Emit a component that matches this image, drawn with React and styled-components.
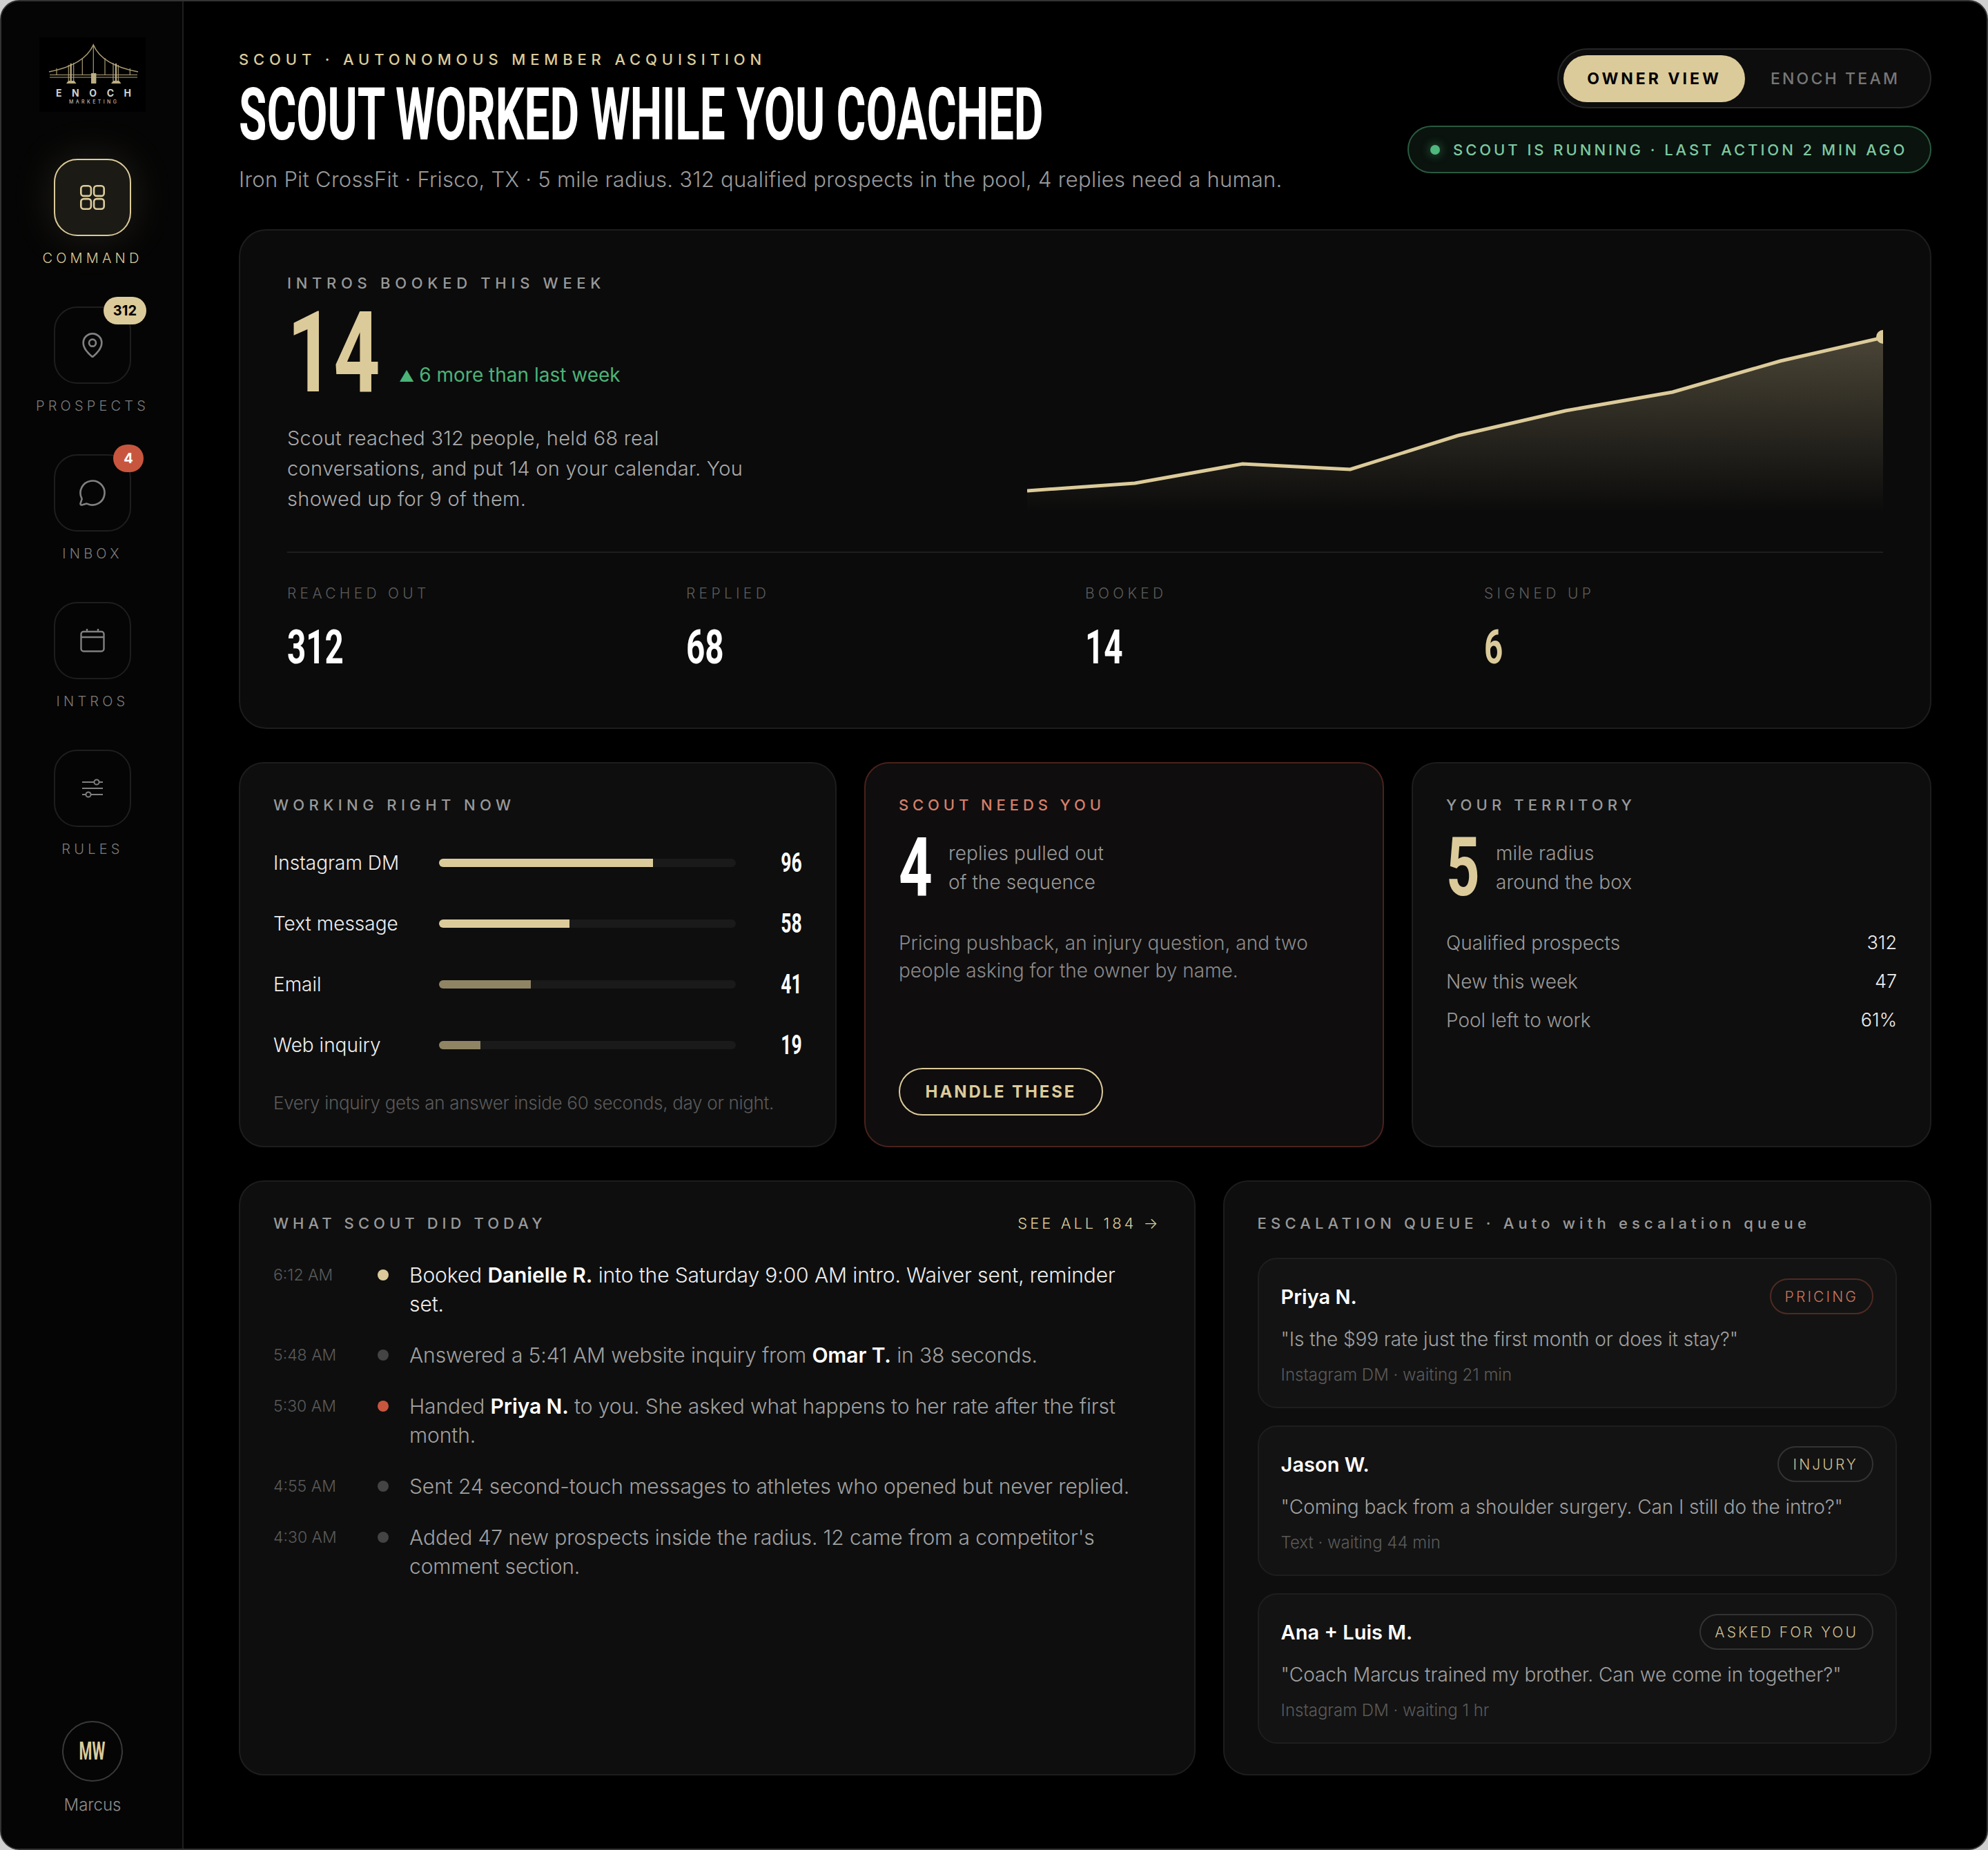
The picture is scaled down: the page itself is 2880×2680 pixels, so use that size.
import React from "react";
import styled, { createGlobalStyle } from "styled-components";
import { MapPin, MessageCircle } from "lucide-react";

const GOLD = "#dccb9a";
const SANS = `Inter, "Open Sans", "Liberation Sans", sans-serif`;
const COND = `Roboto, "Liberation Sans", sans-serif`;

const Global = createGlobalStyle`
  html, body { margin: 0; padding: 0; background: #cfcfcf; }
  * { box-sizing: border-box; }
`;

const Frame = styled.div`
  width: 2880px; height: 2680px; display: flex; overflow: hidden;
  background: #000; border: 2px solid #333; border-radius: 28px;
  font-family: ${SANS}; color: #eee;
`;

const Sidebar = styled.aside`
  flex: 0 0 264px; background: #050505; border-right: 2px solid #1e1e1e;
  display: flex; flex-direction: column; align-items: center;
  padding: 52px 0 47px 2px;
`;
const LogoBox = styled.div`width: 154px; height: 108px; background: #000; margin-bottom: 68px; flex: none;`;
const NavList = styled.nav`display: flex; flex-direction: column; gap: 58px; align-items: center;`;
const NavItem = styled.div`display: flex; flex-direction: column; align-items: center; gap: 20px;`;
const NavBtn = styled.div`
  position: relative; width: 112px; height: 112px; border-radius: 34px;
  display: flex; align-items: center; justify-content: center;
  border: 2px solid ${p => (p.$active ? GOLD : "#1e1e1e")};
  background: ${p => (p.$active ? "#1b1a15" : "transparent")};
  color: ${p => (p.$active ? GOLD : "#808080")};
  box-shadow: ${p => (p.$active ? "0 0 64px rgba(220,203,154,.14)" : "none")};
`;
const NavLabel = styled.div`
  font-size: 20px; line-height: 24px; font-weight: 300; letter-spacing: 5.2px;
  color: ${p => (p.$active ? GOLD : "#7c7c7c")}; white-space: nowrap;
`;
const NavBadge = styled.span`
  position: absolute; top: -16px; right: ${p => p.$right}px; height: 40px; min-width: 44px; padding: 0 14px;
  border-radius: 20px; display: flex; align-items: center; justify-content: center;
  font-size: 20px; font-weight: 700;
  background: ${p => (p.$red ? "#c8563e" : GOLD)}; color: ${p => (p.$red ? "#fff" : "#000")};
`;
const Person = styled.div`margin-top: auto; display: flex; flex-direction: column; align-items: center; gap: 18px;`;
const Avatar = styled.div`
  width: 88px; height: 88px; border-radius: 50%; border: 2px solid #3a3a3a;
  display: flex; align-items: center; justify-content: center;
`;
const PersonName = styled.div`font-size: 24px; line-height: 32px; font-weight: 300; color: #8c8c8c;`;

const Cond = styled.span`
  display: inline-block; white-space: nowrap; font-family: ${COND}; font-weight: 700;
  font-size: ${p => p.$size}px; line-height: ${p => p.$lh || p.$size}px;
  color: ${p => p.$color || "#fff"};
  transform: scaleX(${p => p.$sx}); transform-origin: ${p => p.$origin || "left"} center;
`;

const Main = styled.main`flex: 1; min-width: 0; padding: 70px 80px 0 80px; display: flex; flex-direction: column;`;
const Header = styled.header`display: flex; justify-content: space-between; align-items: flex-start; margin-bottom: 50px;`;
const HeadLeft = styled.div`flex: 1; min-width: 0;`;
const Eyebrow = styled.div`font-size: 22px; line-height: 28px; font-weight: 500; letter-spacing: 6.85px; color: ${GOLD}; white-space: nowrap;`;
const TitleLine = styled.h1`margin: 15px 0 19px; font-weight: 700; height: 104px;`;
const Sub = styled.p`margin: 0; font-size: 31px; line-height: 44px; font-weight: 300; color: #9a9a9a; white-space: nowrap; letter-spacing: .26px;`;
const HeadRight = styled.div`flex: none; margin-top: -2px; display: flex; flex-direction: column; align-items: flex-end; gap: 25px;`;
const Toggle = styled.div`
  height: 87px; width: 542px; border-radius: 44px; border: 2px solid #262626; background: #0d0d0d;
  display: flex; align-items: center; padding: 0 7px;
`;
const ToggleOn = styled.div`
  width: 263px; height: 68px; border-radius: 34px; background: ${GOLD}; color: #000;
  display: flex; align-items: center; justify-content: center;
  font-size: 23px; font-weight: 700; letter-spacing: 4px; white-space: nowrap;
`;
const ToggleOff = styled.div`
  flex: 1; text-align: center; font-size: 23px; font-weight: 500; letter-spacing: 3.2px; color: #777; white-space: nowrap;
`;
const Status = styled.div`
  width: 759px; height: 69px; border-radius: 35px; border: 2px solid #2a5a40; background: #0a130e;
  display: flex; align-items: center; padding-left: 31px; gap: 19px;
`;
const StatusDot = styled.span`width: 14px; height: 14px; border-radius: 50%; background: #4fb87c; box-shadow: 0 0 14px rgba(79,184,124,.6);`;
const StatusText = styled.span`font-size: 22px; font-weight: 500; letter-spacing: 3.95px; color: #7ec9a0; white-space: nowrap;`;

const Card = styled.section`
  border: 2px solid ${p => p.$border || "#1d1d1d"}; background: ${p => p.$bg || "#0e0e0e"};
  border-radius: 36px; padding: 48px 48px 44px; display: flex; flex-direction: column; min-width: 0;
`;
const Hero = styled(Card)`padding: 64px 68px 82px; background: #0b0b0b; border-radius: 40px; margin-bottom: 48px;`;
const HeroTop = styled.div`display: flex; align-items: flex-start; padding-bottom: 54px; border-bottom: 2px solid #1e1e1e; margin-bottom: 47px;`;
const HeroLeft = styled.div`flex: 0 0 1072px; min-width: 0;`;
const Label = styled.div`
  font-size: 22px; line-height: 24px; font-weight: 500; letter-spacing: ${p => p.$sp || 6.6}px; white-space: nowrap;
  color: ${p => p.$color || "#999"};
`;
const BigRow = styled.div`display: flex; align-items: flex-end; margin: 32px 0 43px; height: 116px;`;
const BigSlot = styled.div`flex: 0 0 162px; min-width: 0; height: 116px;`;
const Delta = styled.div`font-size: 28px; line-height: 36px; font-weight: 400; color: #4bb377; margin-bottom: 7px; white-space: nowrap;`;
const DeltaArrow = styled.span`font-size: 22px; margin-right: 7px;`;
const Para = styled.p`margin: 0; font-size: 29px; line-height: 44px; font-weight: 300; color: #aaa; max-width: 700px; letter-spacing: .3px;`;
const Chart = styled.svg`flex: none; width: 1240px; height: 270px; margin-top: 74px; overflow: hidden;`;
const Stats = styled.div`display: grid; grid-template-columns: repeat(4, 1fr);`;
const Stat = styled.div`display: flex; flex-direction: column; gap: 32px;`;
const StatLabel = styled.div`font-size: 21px; line-height: 24px; font-weight: 300; letter-spacing: 5.3px; color: #5c5c5c; white-space: nowrap;`;

const Row2 = styled.div`display: grid; grid-template-columns: 1.15fr 1fr 1fr; gap: 40px; margin-bottom: 48px;`;
const Row3 = styled.div`display: grid; grid-template-columns: 1.35fr 1fr; gap: 40px; height: 861px;`;

const Bars = styled.div`display: flex; flex-direction: column; gap: 48px; margin-top: 52px;`;
const BarRow = styled.div`display: flex; align-items: center; height: 40px;`;
const BarName = styled.div`flex: 0 0 240px; font-size: 28px; font-weight: 300; color: #eee; white-space: nowrap;`;
const Track = styled.div`flex: 0 0 430px; height: 12px; border-radius: 6px; background: #1a1a1a; overflow: hidden;`;
const Fill = styled.div`height: 100%; background: ${p => (p.$dim ? "#8f8565" : GOLD)};`;
const BarValue = styled.div`flex: 1; display: flex; justify-content: flex-end;`;
const Note = styled.div`margin-top: 46px; font-size: 26px; line-height: 36px; font-weight: 300; color: #5a5a5a; white-space: nowrap; letter-spacing: -.3px;`;

const NumberRow = styled.div`display: flex; align-items: center; margin-top: 37px; height: 84px;`;
const NumSlot = styled.div`flex: 0 0 ${p => p.$w}px; height: 84px; display: flex; align-items: center;`;
const NumText = styled.div`font-size: 28px; line-height: 42px; font-weight: 300; color: #999; white-space: nowrap; letter-spacing: .1px;`;
const Body = styled.p`margin: 47px 0 0; font-size: 28px; line-height: 40px; font-weight: 300; color: #8a8a8a;`;
const Handle = styled.button`
  margin-top: auto; align-self: flex-start; width: 296px; height: 69px; border-radius: 35px; border: 2px solid ${GOLD};
  background: transparent; color: ${GOLD}; font-family: ${SANS}; font-size: 24px; font-weight: 700; letter-spacing: .12em; white-space: nowrap; padding: 0;
`;
const Kv = styled.div`display: flex; flex-direction: column; gap: 16px; margin-top: 47px;`;
const KvRow = styled.div`display: flex; justify-content: space-between; font-size: 28px; line-height: 40px; font-weight: 300; color: #999;`;
const KvVal = styled.span`color: #eee; font-weight: 300; font-size: 27px;`;

const ListHead = styled.div`display: flex; justify-content: space-between; align-items: center;`;
const SeeAll = styled.div`font-size: 22px; line-height: 24px; font-weight: 300; letter-spacing: 4px; color: ${GOLD}; white-space: nowrap;`;
const Feed = styled.div`display: flex; flex-direction: column; gap: 32px; margin-top: 42px;`;
const FeedRow = styled.div`display: grid; grid-template-columns: 146px 51px 1fr; align-items: start;`;
const FeedTime = styled.div`font-size: 23px; line-height: 42px; font-weight: 300; color: #5a5a5a; white-space: nowrap;`;
const DotCell = styled.div`height: 42px; display: flex; align-items: center;`;
const FeedDot = styled.span`width: 16px; height: 16px; border-radius: 50%; background: ${p => p.$c}; margin-left: 5px;`;
const FeedText = styled.div`
  font-size: 30px; line-height: 42px; font-weight: 300; color: ${p => (p.$first ? "#eee" : "#a0a0a0")}; letter-spacing: -.1px; max-width: 1060px;
  strong { font-weight: 600; color: #fff; }
`;

const Queue = styled.div`display: flex; flex-direction: column; gap: 25px; margin-top: 38px;`;
const QItem = styled.article`
  border: 2px solid #1e1e1e; background: #131313; border-radius: 28px; padding: 28px 32px; height: 218px;
`;
const QHead = styled.div`display: flex; justify-content: space-between; align-items: center; height: 52px;`;
const QName = styled.div`font-size: 29px; font-weight: 600; color: #fff; white-space: nowrap;`;
const QTag = styled.span`
  height: 52px; border-radius: 26px; padding: 0 20px; display: flex; align-items: center; white-space: nowrap;
  font-size: 21px; font-weight: 300; letter-spacing: .15em;
  border: 2px solid ${p => (p.$red ? "#4f2a22" : "#333")}; color: ${p => (p.$red ? "#c8765c" : "#cfbf92")};
`;
const QQuote = styled.div`margin-top: 15px; font-size: 28px; line-height: 42px; font-weight: 300; color: #a0a0a0; white-space: nowrap; letter-spacing: -.08px;`;
const QMeta = styled.div`margin-top: 13px; font-size: 24px; line-height: 36px; font-weight: 300; color: #5a5a5a; white-space: nowrap;`;

const Logo = () => (
  <svg width="154" height="108" viewBox="0 0 154 108">
    <g stroke="#a99b72" fill="none">
      <path d="M14 50 C40 45 68 34 78.3 11 C88 34 116 45 143 50" strokeWidth="1.6" />
      <path d="M15 54.5H142M15 58H142" strokeWidth="1.2" stroke="#b3a579" />
      <path d="M78.3 11V52M25 45V54M62.3 30V54M95 30V54M131.3 45V54M42.3 40V63M49.7 37V63M107 37V63M114.3 40V63" strokeWidth="1.2" />
      <path d="M45.7 38V63M111 38V63" strokeWidth="2.2" stroke="#bdae82" />
    </g>
    <rect x="75" y="52" width="7.4" height="15" rx="0.6" fill="#bcae84" />
    <path d="M42 63H50.5L53.5 67H39ZM107 63H115.5L118.5 67H104Z" fill="#bcae84" />
    <text x="24" y="86" textLength="109" fontFamily={SANS} fontSize="14" fontWeight="700" fill="#cfcfcf">ENOCH</text>
    <text x="43" y="95.5" textLength="69" fontFamily={SANS} fontSize="7" fontWeight="500" fill="#b8b8b8">MARKETING</text>
  </svg>
);

const GridIcon = () => (
  <svg width="36" height="36" viewBox="0 0 36 36" fill="none" stroke="currentColor" strokeWidth="2.6">
    <rect x="1.3" y="1.3" width="14.6" height="14.6" rx="4" />
    <rect x="20.1" y="1.3" width="14.6" height="14.6" rx="4" />
    <rect x="1.3" y="20.1" width="14.6" height="14.6" rx="4" />
    <rect x="20.1" y="20.1" width="14.6" height="14.6" rx="4" />
  </svg>
);
const CalIcon = () => (
  <svg width="36" height="34" viewBox="0 0 36 34" fill="none" stroke="currentColor" strokeWidth="2.4">
    <rect x="1.5" y="4" width="33" height="28.5" rx="3.5" />
    <path d="M1.5 12H34.5M10 0V5M26 0V5" />
  </svg>
);
const SlidersIcon = () => (
  <svg width="30" height="28" viewBox="0 0 30 28" fill="none" stroke="currentColor" strokeWidth="2">
    <path d="M0 5H17M25 5H30M0 14H30M0 23H5M13 23H30" />
    <circle cx="21" cy="5" r="3.6" />
    <circle cx="9" cy="23" r="3.6" />
  </svg>
);

const nav = [
  { label: "COMMAND", icon: <GridIcon />, active: true },
  { label: "PROSPECTS", icon: <MapPin size={40} strokeWidth={1.6} />, badge: "312", right: -24 },
  { label: "INBOX", icon: <MessageCircle size={42} strokeWidth={1.5} />, badge: "4", red: true, right: -20 },
  { label: "INTROS", icon: <CalIcon /> },
  { label: "RULES", icon: <SlidersIcon /> },
];
const bars = [
  ["Instagram DM", 72, "96", false],
  ["Text message", 44, "58", false],
  ["Email", 31, "41", true],
  ["Web inquiry", 14, "19", true],
];
const pts = "0,239 156,228 312,200 468,208 624,159 780,123 935,96 1091,51 1240,17";

const feed = [
  { t: "6:12 AM", c: GOLD, first: true, x: <>Booked <strong>Danielle R.</strong> into the Saturday 9:00 AM intro. Waiver sent, reminder set.</> },
  { t: "5:48 AM", c: "#444", x: <>Answered a 5:41 AM website inquiry from <strong>Omar T.</strong> in 38 seconds.</> },
  { t: "5:30 AM", c: "#c8563e", x: <>Handed <strong>Priya N.</strong> to you. She asked what happens to her rate after the first month.</> },
  { t: "4:55 AM", c: "#444", x: <>Sent 24 second-touch messages to athletes who opened but never replied.</> },
  { t: "4:30 AM", c: "#444", x: <>Added 47 new prospects inside the radius. 12 came from a competitor's comment section.</> },
];
const queue = [
  { n: "Priya N.", tag: "PRICING", red: true, q: `"Is the $99 rate just the first month or does it stay?"`, m: "Instagram DM · waiting 21 min" },
  { n: "Jason W.", tag: "INJURY", q: `"Coming back from a shoulder surgery. Can I still do the intro?"`, m: "Text · waiting 44 min" },
  { n: "Ana + Luis M.", tag: "ASKED FOR YOU", q: `"Coach Marcus trained my brother. Can we come in together?"`, m: "Instagram DM · waiting 1 hr" },
];

export default function App() {
  return (
    <>
      <Global />
      <Frame>
        <Sidebar>
          <LogoBox><Logo /></LogoBox>
          <NavList>
            {nav.map(n => (
              <NavItem key={n.label}>
                <NavBtn $active={n.active}>
                  {n.icon}
                  {n.badge && <NavBadge $red={n.red} $right={n.right}>{n.badge}</NavBadge>}
                </NavBtn>
                <NavLabel $active={n.active}>{n.label}</NavLabel>
              </NavItem>
            ))}
          </NavList>
          <Person>
            <Avatar><Cond $size={36} $sx={0.6} $color={GOLD} $origin="center">MW</Cond></Avatar>
            <PersonName>Marcus</PersonName>
          </Person>
        </Sidebar>
        <Main>
          <Header>
            <HeadLeft>
              <Eyebrow>SCOUT · AUTONOMOUS MEMBER ACQUISITION</Eyebrow>
              <TitleLine><Cond $size={105} $lh={104} $sx={0.625}>SCOUT WORKED WHILE YOU COACHED</Cond></TitleLine>
              <Sub>Iron Pit CrossFit · Frisco, TX · 5 mile radius. 312 qualified prospects in the pool, 4 replies need a human.</Sub>
            </HeadLeft>
            <HeadRight>
              <Toggle><ToggleOn>OWNER VIEW</ToggleOn><ToggleOff>ENOCH TEAM</ToggleOff></Toggle>
              <Status><StatusDot /><StatusText>SCOUT IS RUNNING · LAST ACTION 2 MIN AGO</StatusText></Status>
            </HeadRight>
          </Header>

          <Hero>
            <HeroTop>
              <HeroLeft>
                <Label $sp={6.7}>INTROS BOOKED THIS WEEK</Label>
                <BigRow>
                  <BigSlot><Cond $size={163} $lh={116} $sx={0.72} $color={GOLD}>14</Cond></BigSlot>
                  <Delta><DeltaArrow>▲</DeltaArrow>6 more than last week</Delta>
                </BigRow>
                <Para>Scout reached 312 people, held 68 real conversations, and put 14 on your calendar. You showed up for 9 of them.</Para>
              </HeroLeft>
              <Chart viewBox="0 0 1240 270">
                <defs>
                  <linearGradient id="area" x1="0" y1="0" x2="0" y2="1">
                    <stop offset="0" stopColor={GOLD} stopOpacity="0.3" />
                    <stop offset="1" stopColor={GOLD} stopOpacity="0" />
                  </linearGradient>
                </defs>
                <polygon points={`${pts} 1240,270 0,270`} fill="url(#area)" />
                <polyline points={pts} fill="none" stroke={GOLD} strokeWidth="5" />
                <circle cx="1240" cy="16" r="10" fill={GOLD} />
              </Chart>
            </HeroTop>
            <Stats>
              {[["REACHED OUT", "312"], ["REPLIED", "68"], ["BOOKED", "14"], ["SIGNED UP", "6", GOLD]].map(([l, v, c]) => (
                <Stat key={l}>
                  <StatLabel>{l}</StatLabel>
                  <div><Cond $size={68} $sx={0.7} $color={c}>{v}</Cond></div>
                </Stat>
              ))}
            </Stats>
          </Hero>

          <Row2>
            <Card>
              <Label $sp={6.4}>WORKING RIGHT NOW</Label>
              <Bars>
                {bars.map(([n, w, v, dim]) => (
                  <BarRow key={n}>
                    <BarName>{n}</BarName>
                    <Track><Fill $dim={dim} style={{ width: `${w}%` }} /></Track>
                    <BarValue><Cond $size={39} $sx={0.68} $origin="right">{v}</Cond></BarValue>
                  </BarRow>
                ))}
              </Bars>
              <Note>Every inquiry gets an answer inside 60 seconds, day or night.</Note>
            </Card>
            <Card $border="#4a221c" $bg="#0f0d0e">
              <Label $color="#d4806a" $sp={5.9}>SCOUT NEEDS YOU</Label>
              <NumberRow>
                <NumSlot $w={72}><Cond $size={118} $lh={84} $sx={0.72}>4</Cond></NumSlot>
                <NumText>replies pulled out<br />of the sequence</NumText>
              </NumberRow>
              <Body>Pricing pushback, an injury question, and two people asking for the owner by name.</Body>
              <Handle>HANDLE THESE</Handle>
            </Card>
            <Card>
              <Label $sp={6.1}>YOUR TERRITORY</Label>
              <NumberRow>
                <NumSlot $w={72}><Cond $size={118} $lh={84} $sx={0.72} $color={GOLD}>5</Cond></NumSlot>
                <NumText>mile radius<br />around the box</NumText>
              </NumberRow>
              <Kv>
                <KvRow>Qualified prospects<KvVal>312</KvVal></KvRow>
                <KvRow>New this week<KvVal>47</KvVal></KvRow>
                <KvRow>Pool left to work<KvVal>61%</KvVal></KvRow>
              </Kv>
            </Card>
          </Row2>

          <Row3>
            <Card>
              <ListHead>
                <Label $sp={6.05}>WHAT SCOUT DID TODAY</Label>
                <SeeAll>SEE ALL 184 →</SeeAll>
              </ListHead>
              <Feed>
                {feed.map(f => (
                  <FeedRow key={f.t}>
                    <FeedTime>{f.t}</FeedTime>
                    <DotCell><FeedDot $c={f.c} /></DotCell>
                    <FeedText $first={f.first}>{f.x}</FeedText>
                  </FeedRow>
                ))}
              </Feed>
            </Card>
            <Card>
              <Label $sp={6.16}>ESCALATION QUEUE · Auto with escalation queue</Label>
              <Queue>
                {queue.map(q => (
                  <QItem key={q.n}>
                    <QHead><QName>{q.n}</QName><QTag $red={q.red}>{q.tag}</QTag></QHead>
                    <QQuote>{q.q}</QQuote>
                    <QMeta>{q.m}</QMeta>
                  </QItem>
                ))}
              </Queue>
            </Card>
          </Row3>
        </Main>
      </Frame>
    </>
  );
}
